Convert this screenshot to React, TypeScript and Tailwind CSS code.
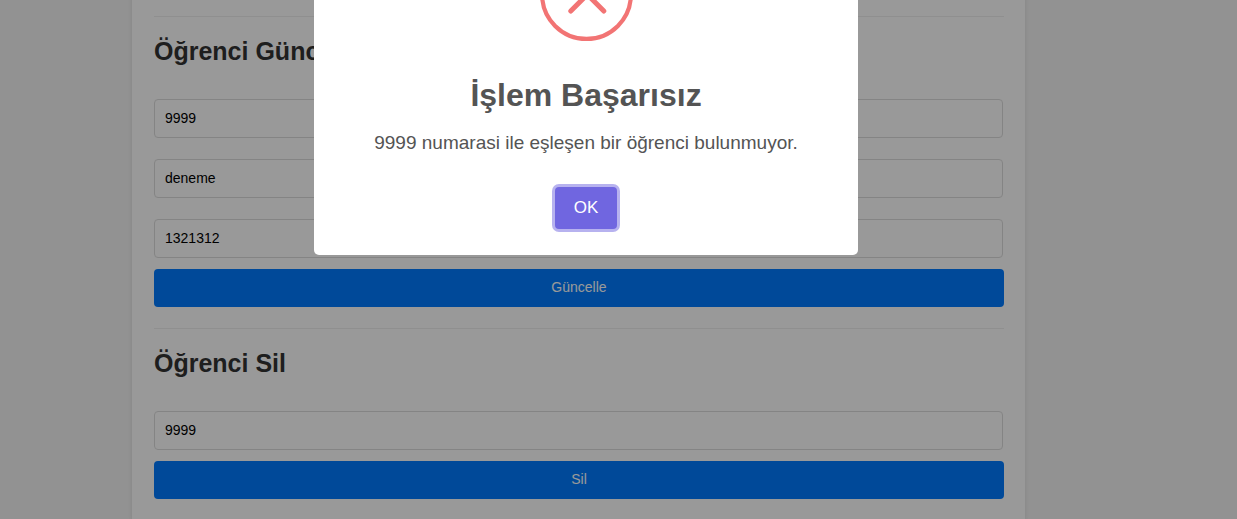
import { useEffect, useRef, useState } from "react";
import type { ReactNode } from "react";

type Field = { id: string; label: string; value: string };

function TextField({ id, label, value }: Field) {
  return (
    <div className="pr-px">
      <label htmlFor={id} className="sr-only">
        {label}
      </label>
      <input
        id={id}
        type="text"
        defaultValue={value}
        className="block h-[39px] w-full rounded-[4px] border border-[#dddddd] bg-white px-[10px] pb-[2px] text-[14px] text-black"
      />
    </div>
  );
}

function FormSection({ title, action, children }: { title: string; action: string; children: ReactNode }) {
  return (
    <section className="border-t border-[#eeeeee] pt-[18px] pb-[21px]">
      <h2 className="text-[25px] leading-[32px] font-bold text-[#333333]">{title}</h2>
      <form className="mt-8" onSubmit={(e) => e.preventDefault()}>
        <div className="flex flex-col gap-[21px]">{children}</div>
        <button
          type="submit"
          className="mt-[11px] block h-[38px] w-full rounded-[4px] bg-[#007bff] pb-[2px] text-[14px] text-white"
        >
          {action}
        </button>
      </form>
    </section>
  );
}

function ErrorDialog({ onClose }: { onClose: () => void }) {
  const okButton = useRef<HTMLButtonElement>(null);

  useEffect(() => {
    okButton.current?.focus({ preventScroll: true });
  }, []);

  return (
    <div className="fixed inset-0 flex items-start justify-center overflow-hidden bg-black/40 pr-[65px]">
      <div
        role="dialog"
        aria-modal="true"
        aria-labelledby="dialog-title"
        aria-describedby="dialog-text"
        className="-mt-[90px] flex w-full max-w-[544px] flex-col items-center rounded-[5px] bg-white pt-[38px] pb-[26px] text-[#545454]"
      >
        <svg className="size-[93px]" viewBox="0 0 93 93" fill="none" stroke="#f27474" aria-hidden="true">
          <circle cx="46.5" cy="46.5" r="44.4" strokeWidth="4.2" />
          <path d="M30.8 30 63.8 63M63.8 30 30.8 63" strokeWidth="5" strokeLinecap="round" />
        </svg>
        <h2 id="dialog-title" className="mt-[34px] text-[32px] leading-[40px] font-bold">
          İşlem Başarısız
        </h2>
        <p id="dialog-text" className="mt-4 text-[19px] leading-[24px]">
          9999 numarasi ile eşleşen bir öğrenci bulunmuyor.
        </p>
        <button
          ref={okButton}
          type="button"
          onClick={onClose}
          className="mt-8 h-[42px] w-[62px] rounded-[4px] bg-[#7066e0] text-[17px] text-white ring-3 ring-[#7066e0]/50 outline-none"
        >
          OK
        </button>
      </div>
    </div>
  );
}

export default function App() {
  const [open, setOpen] = useState(true);

  return (
    <div className="min-h-screen overflow-hidden bg-[#f4f4f4] pr-20 font-['Liberation_Sans',Arial,sans-serif]">
      <main className="mx-auto -mt-5 max-w-[893px] bg-white pt-9 pr-[21px] pl-[22px] shadow-[0_0_5px_rgba(0,0,0,0.1)]">
        <FormSection title="Öğrenci Güncelle" action="Güncelle">
          <TextField id="update-number" label="Öğrenci numarası" value="9999" />
          <TextField id="update-name" label="Öğrenci adı" value="deneme" />
          <TextField id="update-phone" label="Telefon" value="1321312" />
        </FormSection>
        <FormSection title="Öğrenci Sil" action="Sil">
          <TextField id="delete-number" label="Silinecek öğrenci numarası" value="9999" />
        </FormSection>
      </main>
      {open && <ErrorDialog onClose={() => setOpen(false)} />}
    </div>
  );
}
